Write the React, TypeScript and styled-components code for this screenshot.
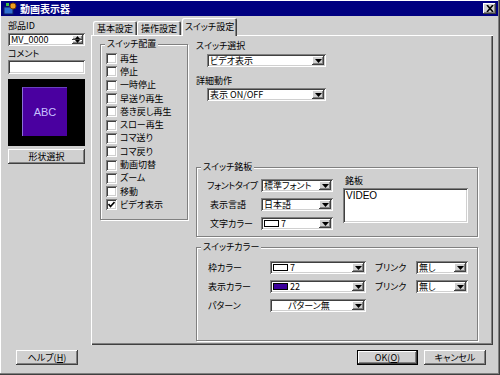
import React from "react";
import styled, { createGlobalStyle, css } from "styled-components";

const FACE = "#d0d0d0";
const PURPLE = "#3c009c";

const raised = css`
  box-shadow: inset -1px -1px #404040, inset 1px 1px #ffffff, inset -2px -2px #808080;
`;
const sunken = css`
  box-shadow: inset 1px 1px #808080, inset -1px -1px #ffffff, inset 2px 2px #404040,
    inset -2px -2px ${FACE};
`;

const Global = createGlobalStyle`
  html, body { margin: 0; padding: 0; background: ${FACE}; }
  body {
    font-family: "Noto Sans CJK JP", "Liberation Sans", sans-serif;
    font-size: 9px;
    color: #000;
  }
  *, *::before, *::after { box-sizing: border-box; }
`;

const Win = styled.div`
  width: 500px;
  height: 375px;
  background: ${FACE};
  padding: 1px 2px 2px 1px;
  display: flex;
  flex-direction: column;
  box-shadow: inset -1px -1px #404040, inset -2px -2px #808080, inset 1px 1px #ffffff;
  font-feature-settings: "palt";
  overflow: hidden;
`;

const TitleBar = styled.div`
  height: 15px;
  background: #000080;
  display: flex;
  align-items: center;
  padding: 0 2px 0 2px;
  gap: 3px;
`;

const TitleText = styled.span`
  color: #fff;
  font-weight: bold;
  font-size: 10px;
  line-height: 12px;
  flex: 1;
`;

const CloseBtn = styled.div`
  width: 13px;
  height: 11px;
  background: ${FACE};
  ${raised};
  display: flex;
  align-items: center;
  justify-content: center;
`;

const Body = styled.div`
  flex: 1;
  display: flex;
  flex-direction: column;
  padding: 2px 5px 0 7px;
`;

const Main = styled.div`
  display: flex;
  gap: 6px;
  height: 328px;
`;

const LeftCol = styled.div`
  width: 77px;
  display: flex;
  flex-direction: column;
`;

const Label = styled.div<{ $mt?: number; $ml?: number; $tight?: boolean }>`
  line-height: 12px;
  height: 12px;
  margin-top: ${(p) => p.$mt ?? 0}px;
  margin-left: ${(p) => p.$ml ?? 0}px;
  letter-spacing: ${(p) => (p.$tight ? "-0.4px" : "normal")};
  white-space: nowrap;
`;

const Field = styled.div<{ $w: number; $h: number; $mt?: number }>`
  width: ${(p) => p.$w}px;
  height: ${(p) => p.$h}px;
  margin-top: ${(p) => p.$mt ?? 0}px;
  background: #fff;
  ${sunken};
  display: flex;
  align-items: center;
  padding: 2px 2px 2px 3px;
  line-height: 10px;
  white-space: nowrap;
`;

const FieldText = styled.span`
  flex: 1;
`;

const Spinner = styled.div`
  width: 11px;
  height: 9px;
  display: flex;
  flex-direction: column;
`;

const SpinBtn = styled.div`
  flex: 1;
  background: ${FACE};
  ${raised};
  display: flex;
  align-items: center;
  justify-content: center;
`;

const Preview = styled.div`
  margin-top: 5px;
  height: 67px;
  background: #000;
  display: flex;
  align-items: flex-start;
  padding: 8px 0 0 14px;
`;

const PreviewShape = styled.div`
  width: 45px;
  height: 49px;
  background: #4a00a0;
  border-left: 1px solid #8a70d8;
  border-top: 1px solid #6a40c0;
  display: flex;
  align-items: center;
  justify-content: center;
  color: #c8c0ff;
  font-family: "Liberation Sans", sans-serif;
  font-size: 11px;
`;

const Button = styled.div<{ $w: number; $default?: boolean; $mt?: number }>`
  width: ${(p) => p.$w}px;
  height: 15px;
  margin-top: ${(p) => p.$mt ?? 0}px;
  background: ${FACE};
  ${(p) =>
    p.$default
      ? css`
          box-shadow: inset 0 0 0 1px #000, inset -2px -2px #404040, inset 2px 2px #ffffff,
            inset -3px -3px #808080;
        `
      : raised};
  display: flex;
  align-items: center;
  justify-content: center;
  line-height: 12px;
  white-space: nowrap;
`;

const U = styled.span`
  text-decoration: underline;
`;

const TabArea = styled.div`
  width: 402px;
  display: flex;
  flex-direction: column;
`;

const TabStrip = styled.div`
  height: 17px;
  display: flex;
  align-items: flex-end;
  padding-left: 2px;
  position: relative;
  z-index: 1;
`;

const Tab = styled.div<{ $w: number; $active?: boolean }>`
  width: ${(p) => p.$w}px;
  height: ${(p) => (p.$active ? 18 : 14)}px;
  margin-bottom: ${(p) => (p.$active ? -1 : 0)}px;
  margin-left: ${(p) => (p.$active ? 1 : 0)}px;
  background: ${FACE};
  border-radius: 2px 2px 0 0;
  box-shadow: inset 1px 1px #ffffff, inset -1px 0 #404040, inset -2px 0 #808080;
  display: flex;
  align-items: flex-start;
  justify-content: center;
  padding-top: ${(p) => (p.$active ? 3 : 2)}px;
  line-height: 12px;
  white-space: nowrap;
`;

const Panel = styled.div`
  height: 310px;
  background: ${FACE};
  box-shadow: inset 1px 1px #ffffff, inset -1px -1px #404040, inset -2px -2px #808080;
  display: flex;
  gap: 8px;
  padding: 3px 15px 4px 9px;
`;

const Group = styled.fieldset<{ $w?: number; $grow?: boolean; $mt?: number }>`
  margin: ${(p) => p.$mt ?? 0}px 0 0 0;
  padding: 0;
  min-width: 0;
  width: ${(p) => (p.$w ? `${p.$w}px` : "auto")};
  ${(p) => (p.$grow ? "flex: 1;" : "")}
  border: 1px solid #808080;
  box-shadow: inset 1px 1px #ffffff, 1px 1px #ffffff;
`;

const Legend = styled.legend`
  margin-left: 4px;
  padding: 0 2px;
  line-height: 12px;
  background: ${FACE};
  white-space: nowrap;
`;

const CheckList = styled.div`
  display: flex;
  flex-direction: column;
  padding: 2px 0 7px 5px;
`;

const CheckRow = styled.div`
  height: 13.3px;
  display: flex;
  align-items: center;
  gap: 3px;
  line-height: 12px;
  white-space: nowrap;
`;

const Box = styled.div`
  width: 11px;
  height: 11px;
  flex-shrink: 0;
  background: #fff;
  ${sunken};
  display: flex;
  align-items: center;
  justify-content: center;
`;

const RightCol = styled.div`
  flex: 1;
  display: flex;
  flex-direction: column;
`;

const ComboBox = styled.div<{ $w: number; $h: number; $mt?: number; $ml?: number }>`
  width: ${(p) => p.$w}px;
  height: ${(p) => p.$h}px;
  margin-top: ${(p) => p.$mt ?? 0}px;
  margin-left: ${(p) => p.$ml ?? 0}px;
  background: #fff;
  ${sunken};
  display: flex;
  align-items: stretch;
  padding: 2px;
  flex-shrink: 0;
`;

const ComboText = styled.div<{ $pl?: number }>`
  flex: 1;
  min-width: 0;
  display: flex;
  align-items: center;
  gap: 2px;
  padding-left: ${(p) => p.$pl ?? 1}px;
  line-height: 9px;
  white-space: nowrap;
`;

const DropBtn = styled.div`
  width: 12px;
  flex-shrink: 0;
  background: ${FACE};
  ${raised};
  display: flex;
  align-items: center;
  justify-content: center;
`;

const Swatch = styled.span<{ $c: string }>`
  display: inline-block;
  flex-shrink: 0;
  width: 15px;
  height: 7px;
  border: 1px solid #000;
  background: ${(p) => p.$c};
`;

const GroupInner = styled.div`
  display: flex;
  padding: 0 9px 6px 10px;
`;

const FormGrid = styled.div<{ $cols: string; $gap: number; $pt: number }>`
  display: grid;
  grid-template-columns: ${(p) => p.$cols};
  row-gap: ${(p) => p.$gap}px;
  align-items: center;
  padding-top: ${(p) => p.$pt}px;
  white-space: nowrap;
  line-height: 12px;
`;

const NameCol = styled.div`
  display: flex;
  flex-direction: column;
  margin-left: 10px;
  padding-top: 2px;
`;

const TextArea = styled.div`
  width: 125px;
  height: 35px;
  margin-top: 1px;
  background: #fff;
  ${sunken};
  padding: 3px 3px;
  line-height: 10px;
  font-family: "Liberation Sans", sans-serif;
  font-size: 10px;
`;

const ColorInner = styled.div`
  padding: 8px 0 0 11px;
`;

const Footer = styled.div`
  display: flex;
  align-items: center;
  padding: 4px 7px 0 8px;
  gap: 6px;
`;

const Spacer = styled.div`
  flex: 1;
`;

const DownTri = () => (
  <svg width="7" height="4" viewBox="0 0 7 4">
    <polygon points="0,0 7,0 3.5,4" fill="#000" />
  </svg>
);

const SmallTri = ({ up }: { up?: boolean }) => (
  <svg width="5" height="3" viewBox="0 0 5 3">
    <polygon points={up ? "0,3 5,3 2.5,0" : "0,0 5,0 2.5,3"} fill="#000" />
  </svg>
);

const Combo = ({
  w,
  h = 13,
  mt,
  ml,
  pl,
  children,
}: {
  w: number;
  h?: number;
  mt?: number;
  ml?: number;
  pl?: number;
  children: React.ReactNode;
}) => (
  <ComboBox $w={w} $h={h} $mt={mt} $ml={ml}>
    <ComboText $pl={pl}>{children}</ComboText>
    <DropBtn>
      <DownTri />
    </DropBtn>
  </ComboBox>
);

const Check = ({ checked, children }: { checked?: boolean; children: React.ReactNode }) => (
  <CheckRow>
    <Box>
      {checked && (
        <svg width="7" height="7" viewBox="0 0 7 7">
          <polyline points="0.5,3 2.5,5.5 6.5,1" fill="none" stroke="#000" strokeWidth="1.6" />
        </svg>
      )}
    </Box>
    <span>{children}</span>
  </CheckRow>
);

const AppIcon = () => (
  <svg width="14" height="13" viewBox="0 0 14 13">
    <rect x="1" y="5" width="9" height="7" fill="#3070d0" stroke="#102060" strokeWidth="1" />
    <circle cx="10" cy="4" r="3" fill="#f0a020" stroke="#804000" strokeWidth="1" />
    <rect x="3" y="1" width="3" height="3" fill="#40c040" />
  </svg>
);

const items = [
  "再生",
  "停止",
  "一時停止",
  "早送り再生",
  "巻き戻し再生",
  "スロー再生",
  "コマ送り",
  "コマ戻り",
  "動画切替",
  "ズーム",
  "移動",
];

export default function App() {
  return (
    <>
      <Global />
      <Win>
        <TitleBar>
          <AppIcon />
          <TitleText>動画表示器</TitleText>
          <CloseBtn>
            <svg width="8" height="7" viewBox="0 0 8 7">
              <path d="M1 0 L7 7 M7 0 L1 7" stroke="#000" strokeWidth="1.6" />
            </svg>
          </CloseBtn>
        </TitleBar>
        <Body>
          <Main>
            <LeftCol>
              <Label $mt={2}>部品ID</Label>
              <Field $w={77} $h={13} $mt={1}>
                <FieldText>MV_0000</FieldText>
                <Spinner>
                  <SpinBtn>
                    <SmallTri up />
                  </SpinBtn>
                  <SpinBtn>
                    <SmallTri />
                  </SpinBtn>
                </Spinner>
              </Field>
              <Label $mt={2}>コメント</Label>
              <Field $w={77} $h={14} />
              <Preview>
                <PreviewShape>ABC</PreviewShape>
              </Preview>
              <Button $w={77} $mt={3}>
                形状選択
              </Button>
            </LeftCol>
            <TabArea>
              <TabStrip>
                <Tab $w={44}>基本設定</Tab>
                <Tab $w={44}>操作設定</Tab>
                <Tab $w={55} $active>
                  スイッチ設定
                </Tab>
              </TabStrip>
              <Panel>
                <Group $w={89} style={{ alignSelf: "flex-start" }}>
                  <Legend>スイッチ配置</Legend>
                  <CheckList>
                    {items.map((t) => (
                      <Check key={t}>{t}</Check>
                    ))}
                    <Check checked>ビデオ表示</Check>
                  </CheckList>
                </Group>
                <RightCol>
                  <Label $mt={2}>スイッチ選択</Label>
                  <Combo w={119} mt={2} ml={11}>
                    ビデオ表示
                  </Combo>
                  <Label $mt={8}>詳細動作</Label>
                  <Combo w={119} mt={1} ml={11}>
                    表示 ON/OFF
                  </Combo>
                  <Group $mt={60}>
                    <Legend>スイッチ銘板</Legend>
                    <GroupInner>
                      <FormGrid $cols="54px 72px" $gap={6} $pt={6}>
                        <Label $tight>フォントタイプ</Label>
                        <Combo w={72}>標準フォント</Combo>
                        <Label $ml={3}>表示言語</Label>
                        <Combo w={72}>日本語</Combo>
                        <Label $ml={3}>文字カラー</Label>
                        <Combo w={72}>
                          <Swatch $c="#ffffff" />7
                        </Combo>
                      </FormGrid>
                      <NameCol>
                        <Label $ml={2}>銘板</Label>
                        <TextArea>VIDEO</TextArea>
                      </NameCol>
                    </GroupInner>
                  </Group>
                  <Group $mt={4} $grow>
                    <Legend>スイッチカラー</Legend>
                    <ColorInner>
                      <FormGrid $cols="62px 96px 50px 52px" $gap={6} $pt={0}>
                        <span>枠カラー</span>
                        <Combo w={96}>
                          <Swatch $c="#ffffff" />7
                        </Combo>
                        <Label $ml={9}>ブリンク</Label>
                        <Combo w={52}>無し</Combo>
                        <span>表示カラー</span>
                        <Combo w={96}>
                          <Swatch $c={PURPLE} />22
                        </Combo>
                        <Label $ml={9}>ブリンク</Label>
                        <Combo w={52}>無し</Combo>
                        <span>パターン</span>
                        <Combo w={96} pl={16}>
                          パターン無
                        </Combo>
                      </FormGrid>
                    </ColorInner>
                  </Group>
                </RightCol>
              </Panel>
            </TabArea>
          </Main>
          <Footer>
            <Button $w={62}>
              ヘルプ(<U>H</U>)
            </Button>
            <Spacer />
            <Button $w={61} $default>
              OK(<U>O</U>)
            </Button>
            <Button $w={62}>キャンセル</Button>
          </Footer>
        </Body>
      </Win>
    </>
  );
}
